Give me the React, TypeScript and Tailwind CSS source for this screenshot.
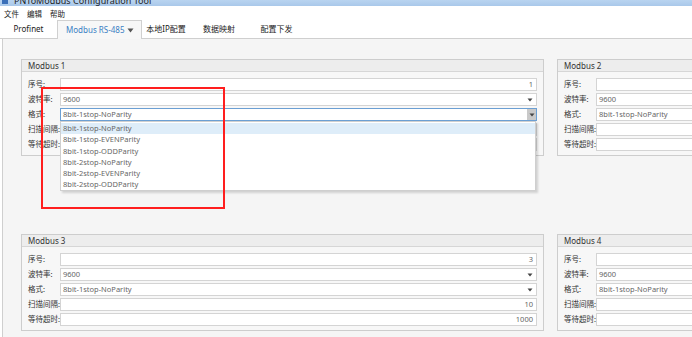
import React from "react";

const FONT = { fontFamily: '"Noto Sans", "Noto Sans CJK SC", sans-serif' };

const formats = [
  "8bit-1stop-NoParity",
  "8bit-1stop-EVENParity",
  "8bit-1stop-ODDParity",
  "8bit-2stop-NoParity",
  "8bit-2stop-EVENParity",
  "8bit-2stop-ODDParity",
];

const Arrow = () => (
  <svg width="6" height="4" viewBox="0 0 6 4">
    <path d="M0.5 0.5 L5.5 0.5 L3 3.5 Z" fill="#444" />
  </svg>
);

type Field = { value?: string; select?: boolean; focused?: boolean; right?: boolean };

const labels = ["序号:", "波特率:", "格式:", "扫描间隔:", "等待超时:"];

const Row = ({ label, field, children }: { label: string; field: Field; children?: React.ReactNode }) => (
  <div className="relative flex h-[13px] items-center">
    <div className="w-[32px] shrink-0 text-[7.5px] text-[#333] whitespace-nowrap">{label}</div>
    <div
      className={`relative flex h-[13px] flex-1 items-center bg-white text-[7.5px] text-[#666] ${
        field.focused ? "border border-[#6b9fd3]" : "border border-[#d4d4d4]"
      } ${field.right ? "justify-end pr-[3px]" : "pl-[2px]"}`}
    >
      <span className="whitespace-nowrap">{field.value}</span>
      {field.select && !field.focused && (
        <span className="absolute right-[3px] top-[4px]">
          <Arrow />
        </span>
      )}
      {field.focused && (
        <span className="absolute right-0 top-0 flex h-[11px] w-[9px] items-center justify-center bg-[#c9c9c9]">
          <Arrow />
        </span>
      )}
    </div>
    {children}
  </div>
);

const Dropdown = () => (
  <div className="absolute left-[32px] right-[1px] top-[13px] z-10 flex h-[70px] flex-col border border-[#cfcfcf] bg-white pt-[1px] shadow-[2px_2px_2px_rgba(0,0,0,0.15)]">
    {formats.map((f, i) => (
      <div
        key={f}
        className={`flex h-[11.4px] items-center pl-[2px] text-[7.5px] text-[#666] whitespace-nowrap ${
          i === 0 ? "bg-[#deedf9]" : ""
        }`}
      >
        {f}
      </div>
    ))}
  </div>
);

const GroupBox = ({ title, fields, open }: { title: string; fields: Field[]; open?: boolean }) => (
  <div className="w-[523px] shrink-0 border border-[#cdcdcd] bg-[#f7f7f7]">
    <div className="flex h-[12px] items-center border-b border-[#d6d6d6] bg-[#ededed] pl-[6px] text-[8px] text-[#333]">
      {title}
    </div>
    <div className="flex flex-col gap-[2px] pb-[4px] pl-[6px] pr-[6px] pt-[6px]">
      {labels.map((l, i) => (
        <Row key={l} label={l} field={fields[i]}>
          {open && i === 2 && <Dropdown />}
        </Row>
      ))}
    </div>
  </div>
);

const emptyFields: Field[] = [
  {},
  { value: "9600", select: true },
  { value: "8bit-1stop-NoParity", select: true },
  {},
  {},
];

export default function App() {
  return (
    <div className="relative flex h-[337px] w-[692px] flex-col overflow-hidden bg-white" style={FONT}>
      {/* title bar, mostly cut off */}
      <div className="flex h-[6px] items-start overflow-hidden bg-gradient-to-b from-[#b9d4f0] to-[#a9c8ea] pl-[2px]">
        <div className="relative -top-[2px] flex items-center gap-[6px]">
          <div className="h-[6px] w-[6px] bg-[#3a6fb8]" />
          <span className="text-[9px] leading-[6px] text-[#222]">PNToModbus Configuration Tool</span>
        </div>
      </div>

      {/* menu bar */}
      <div className="flex h-[14px] items-center gap-[8px] pl-[4px] pt-[3px] text-[7.5px] text-[#222]">
        <span>文件</span>
        <span>编辑</span>
        <span>帮助</span>
      </div>

      {/* tab bar */}
      <div className="flex h-[19px] items-stretch border-b border-[#cfcfcf] text-[8px] text-[#222]">
        <div className="flex w-[57px] items-center justify-center">Profinet</div>
        <div className="mb-[-1px] flex w-[85px] items-center justify-between border border-b-0 border-[#d0d0d0] bg-[#f7f7f7] pl-[8px] pr-[7px] text-[#3b7fc4]">
          <span>Modbus RS-485</span>
          <svg width="7" height="5" viewBox="0 0 7 5">
            <path d="M0.5 0.5 L6.5 0.5 L3.5 4.5 Z" fill="#555" />
          </svg>
        </div>
        <div className="flex w-[48px] items-center justify-center">本地IP配置</div>
        <div className="flex w-[58px] items-center justify-center">数据映射</div>
        <div className="flex w-[57px] items-center justify-center">配置下发</div>
      </div>

      {/* content */}
      <div className="ml-[2px] flex flex-1 flex-col gap-[78px] border-l border-[#cfcfcf] bg-[#f5f5f5] pl-[18px] pt-[20px]">
        <div className="flex gap-[13px]">
          <GroupBox
            title="Modbus 1"
            open
            fields={[
              { value: "1", right: true },
              { value: "9600", select: true },
              { value: "8bit-1stop-NoParity", select: true, focused: true },
              { value: "10", right: true },
              { value: "1000", right: true },
            ]}
          />
          <GroupBox title="Modbus 2" fields={emptyFields} />
        </div>
        <div className="flex gap-[13px]">
          <GroupBox
            title="Modbus 3"
            fields={[
              { value: "3", right: true },
              { value: "9600", select: true },
              { value: "8bit-1stop-NoParity", select: true },
              { value: "10", right: true },
              { value: "1000", right: true },
            ]}
          />
          <GroupBox title="Modbus 4" fields={emptyFields} />
        </div>
      </div>

      {/* red annotation box */}
      <div className="absolute left-[41px] top-[87px] z-20 h-[122px] w-[184px] border-2 border-[#ff1e1e]" />
    </div>
  );
}
